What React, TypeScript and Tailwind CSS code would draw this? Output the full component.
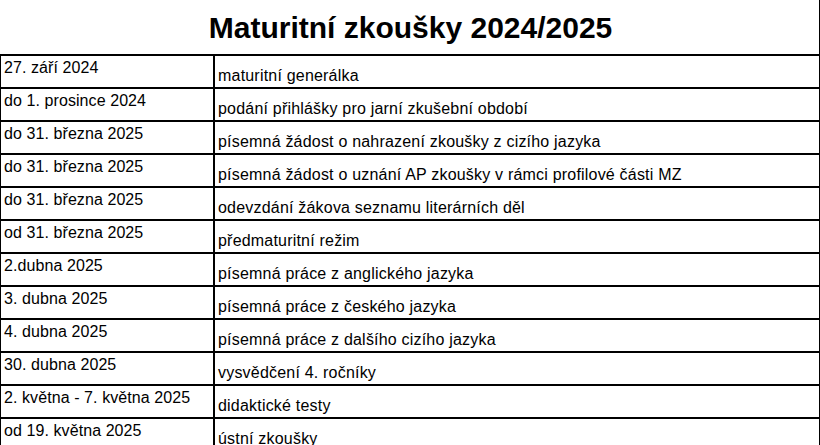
const rows = [
  { date: "27. září 2024", text: "maturitní generálka" },
  { date: "do 1. prosince 2024", text: "podání přihlášky pro jarní zkušební období" },
  { date: "do 31. března 2025", text: "písemná žádost o nahrazení zkoušky z cizího jazyka" },
  { date: "do 31. března 2025", text: "písemná žádost o uznání AP zkoušky v rámci profilové části MZ" },
  { date: "do 31. března 2025", text: "odevzdání žákova seznamu literárních děl" },
  { date: "od 31. března 2025", text: "předmaturitní režim" },
  { date: "2.dubna 2025", text: "písemná práce z anglického jazyka" },
  { date: "3. dubna 2025", text: "písemná práce z českého jazyka" },
  { date: "4. dubna 2025", text: "písemná práce z dalšího cizího jazyka" },
  { date: "30. dubna 2025", text: "vysvědčení 4. ročníky" },
  { date: "2. května - 7. května 2025", text: "didaktické testy" },
  { date: "od 19. května 2025", text: "ústní zkoušky" },
];

export default function App() {
  return (
    <div className="w-[820px] h-[445px] overflow-hidden bg-white text-black font-['Liberation_Sans',Arial,sans-serif]">
      {/* Title row */}
      <div className="h-[56px] border-b-2 border-r border-black flex items-center justify-center">
        <h1 className="text-[30px] leading-none font-bold pt-[1px] pl-[2px]">Maturitní zkoušky 2024/2025</h1>
      </div>

      {/* Schedule rows */}
      {rows.map((row, idx) => (
        <div key={idx} className="flex h-[33px] border-b-2 border-l border-r border-black text-[16px] leading-[18px]">
          <div className="w-[214px] shrink-0 border-r-2 border-black pl-[3px] pt-[3px] whitespace-nowrap tracking-[0.08px]">
            {row.date}
          </div>
          <div className="flex-1 flex items-end pl-[3px] pb-[2px] whitespace-nowrap tracking-[0.2px]">
            {row.text}
          </div>
        </div>
      ))}
    </div>
  );
}
